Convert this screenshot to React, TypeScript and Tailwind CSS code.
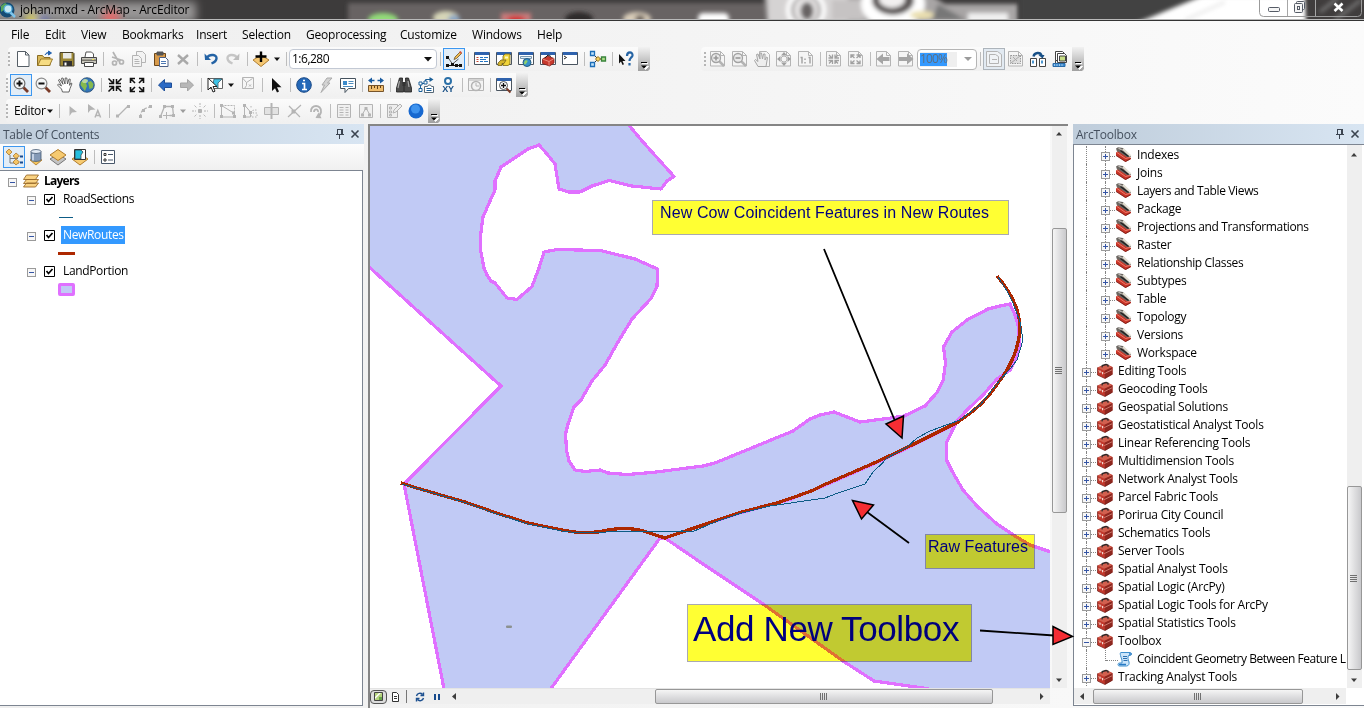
import React from "react";

type Kids = { children?: React.ReactNode };

/* ---------- icon drawings, 16 x 16 ---------- */

const G = "#b4b4b4";
const windowFrame = (
  <g>
    <path d="M.5 1.500h15v12h-15z" fill="#fff" stroke="#4b5560" />
    <path d="M1 1h14v3H1z" fill="#2f62ad" />
  </g>
);
const pageWide = <path d="M.5 .5h10l4 4v10.500h-14z M10.500 .5v4h4" fill="#f5f5f5" stroke={G} />;

const glyphs: Record<string, React.ReactNode> = {
  new: <path d="M2.500 .5h8l3.500 3.500v11.500h-11.500z M10.500 .5v3.500h3.500" fill="#fff" stroke="#555e66" />,
  open: (
    <g>
      <path d="M.5 14.500v-10h5l1.500 2h6v8z" fill="#d9b95c" stroke="#8a6c22" />
      <path d="M.8 14.500l3-6.500h11.700l-3 6.500z" fill="#f6dc83" stroke="#9a7b2b" />
      <path d="M8 4c1-2 2-2.500 4-2.500M11.500 0l3 2-3 2z" fill="#1f5fae" stroke="#1f5fae" />
    </g>
  ),
  save: (
    <g>
      <path d="M1 1.500h13l1 1v12.500h-14z" fill="#9c8734" stroke="#47402a" />
      <path d="M4 2h8.500v5.500h-8.500z" fill="#e9e9e4" />
      <path d="M4 10h9v5h-9z" fill="#303030" />
      <path d="M5.500 11.500h2v3h-2z" fill="#fff" />
    </g>
  ),
  print: (
    <g>
      <path d="M4 6l1-5h5.500l2 2v3" fill="#fff" stroke="#555" />
      <path d="M.5 6.500h15v6h-15z" fill="#c9c7bd" stroke="#474747" />
      <path d="M1 8.500h14v1.500h-14z" fill="#77756c" />
      <path d="M3.500 11.500h9v4h-9z" fill="#fff" stroke="#474747" />
      <path d="M11 8h2v1h-2z" fill="#e8e04d" />
    </g>
  ),
  cut: (
    <g fill="none" stroke={G} strokeWidth="1.700">
      <path d="M4 1l5.500 9.500M3 6l9 3" />
      <circle cx="5.500" cy="12" r="2" />
      <circle cx="12.500" cy="11" r="2" />
    </g>
  ),
  copy: (
    <g fill="#f3f3f3" stroke={G}>
      <path d="M5.500 .5h6l3 3v8h-9z" />
      <path d="M1.500 4.500h6l3 3v8h-9z" />
      <path d="M3.500 8.500h4M3.500 10.500h5M3.500 12.500h5" />
    </g>
  ),
  paste: (
    <g>
      <path d="M1.500 2.500h11v12h-11z" fill="#d79a4b" stroke="#6b4619" />
      <path d="M4 1h6v3h-6z" fill="#555" stroke="#555" />
      <path d="M6.500 6.500h6l2.500 2.500v6.500h-8.500z" fill="#fff" stroke="#4c5f85" />
      <path d="M8 10.500h5M8 12.500h5" stroke="#4d78b4" />
    </g>
  ),
  del: <path d="M3 4l10 9M13 4l-10 9" stroke="#a9a9a9" strokeWidth="2.400" />,
  undo: (
    <g>
      <path d="M4 6.500c3-4 10-3 9.500 1-.3 2.500-2.500 4-5 5" fill="none" stroke="#2463a5" strokeWidth="2.400" />
      <path d="M1.500 2.500l.5 6.500h6z" fill="#2463a5" />
    </g>
  ),
  redo: (
    <g>
      <path d="M12 6.500c-3-4-10-3-9.500 1 .3 2.500 2.500 4 5 5" fill="none" stroke="#c6c6c6" strokeWidth="2.400" />
      <path d="M14.500 2.500l-.5 6.500h-6z" fill="#bdbdbd" />
    </g>
  ),
  add: (
    <g>
      <path d="M8 4l8 5-8 6.500-8-6.500z" fill="#f5c772" stroke="#b07f32" />
      <path d="M8 .5v10.500M2.500 5.500h11" stroke="#000" strokeWidth="2.400" />
    </g>
  ),
  sketch: (
    <g>
      <path d="M2 6.500l4.500 6.500 6-5" fill="none" stroke="#555" />
      <path d="M8 8.500l1-2.500 5-5 1.500 1.500-5 5z" fill="#f2bd52" stroke="#6a5328" strokeWidth=".8" />
      <path d="M13 1l1.500-1 1.500 1.500-1 1.500z" fill="#d9533b" />
      <path d="M0 5h3v3H0zM0 13h3v3H0zM5 12h3v3H5zM9 13h3v3H9zM13 13h3v3h-3z" fill="#111" />
      <path d="M1 14.500h13" stroke="#111" />
    </g>
  ),
  tocwin: (
    <g>
      {windowFrame}
      <path d="M2.500 6.500h2M2.500 8.500h2M2.500 10.500h2" stroke="#c7432e" />
      <path d="M6 6.500h3M10 6.500h4M6 8.500h6M6 10.500h3M10 10.500h4" stroke="#2576c4" />
    </g>
  ),
  catalog: (
    <g>
      {windowFrame}
      <path d="M7 5l2-2h5v10l-2 1.500h-5z" fill="#f0d43b" stroke="#796818" strokeWidth=".8" />
      <path d="M9 5.500h3v2h-3z" fill="#fff9bf" />
      <path d="M2 12l3-3h5l-2 3.500h-2v2h-4z" fill="#d6b52c" stroke="#75631c" strokeWidth=".8" />
    </g>
  ),
  search: (
    <g>
      {windowFrame}
      <path d="M2.500 5.500h11v2h-11z" fill="#e4f2fb" stroke="#7997b0" />
      <circle cx="9" cy="11.500" r="4" fill="#368fca" stroke="#245d84" />
      <path d="M7 9.500c3-1 3 1 2 2s-1 2-2 2-1.500-2 0-4z" fill="#8fd06a" />
    </g>
  ),
  toolboxwin: (
    <g>
      {windowFrame}
      <path d="M2.500 8l5-3 6.500 2.500v4.500l-4.500 3-7-2.500z" fill="#c8392e" stroke="#7c1a14" strokeWidth=".8" />
      <path d="M2.500 8l6.500 2.500 5-3M9 10.500v4" stroke="#f1a091" fill="none" strokeWidth=".8" />
      <path d="M5 7l3-3 3 1.500" stroke="#222" fill="none" />
    </g>
  ),
  python: (
    <g>
      {windowFrame}
      <path d="M2 5l2.500 1.500-2.500 1.500" fill="none" stroke="#222" />
    </g>
  ),
  model: (
    <g>
      <path d="M3 3l5 5M3 13l5-5h4" fill="none" stroke="#333" />
      <path d="M.5 .5h4v4h-4zM.5 11.500h4v4h-4z" fill="#bfe2fa" stroke="#1d6eb8" strokeWidth="1.300" />
      <path d="M8 5.500l2.500 2.500-2.500 2.500-2.500-2.500z" fill="#f6cf5c" stroke="#94731b" />
      <path d="M11.500 6h4v4h-4z" fill="#aedc88" stroke="#37833a" strokeWidth="1.300" />
    </g>
  ),
  help: (
    <g>
      <path d="M1 3v9.500l2-2 1.500 3.500 1.500-.8-1.500-3.200h3z" fill="#111" />
      <path d="M9 5c0-5 6-4.500 5.500-.5-.3 2-3 2.500-3 5.500M11.500 12v2.500" fill="none" stroke="#2664a4" strokeWidth="2.200" />
    </g>
  ),
  zoomin: (
    <g>
      <path d="M9.500 9.500l5.500 5.500" stroke="#7a3b28" strokeWidth="2.800" />
      <circle cx="6.500" cy="6.500" r="5.400" fill="#f4f6f7" stroke="#6d6d6d" strokeWidth="1.200" />
      <path d="M3.500 6.500h6M6.500 3.500v6" stroke="#111" strokeWidth="2" />
    </g>
  ),
  zoomout: (
    <g>
      <path d="M9.500 9.500l5.500 5.500" stroke="#7a3b28" strokeWidth="2.800" />
      <circle cx="6.500" cy="6.500" r="5.400" fill="#f4f6f7" stroke="#8b8b8b" strokeWidth="1.200" />
      <path d="M3.500 6.500h6" stroke="#111" strokeWidth="2" />
    </g>
  ),
  hand: (
    <path
      d="M5.500 15l-1-3-4-4 1-1 3 2-3-6 1.200-.7 3.300 5-1.500-6 1.500-.3 2 6 .2-6h1.600l.7 6 1.500-5 1.300.3-.8 6 1.500-2.300 1 .6-2 5-1 3.400z"
      fill="#fff"
      stroke="#555"
      strokeWidth=".9"
    />
  ),
  globe: (
    <g>
      <circle cx="8" cy="8" r="7.300" fill="#3275bb" stroke="#25486c" strokeWidth=".8" />
      <path d="M2 5l4-3 3 1-2 3 1 3-2 5-3-4-1.500-2zM9 5l3-1 2.500 3-1 4-3 1z" fill="#86b94d" />
      <ellipse cx="6" cy="4" rx="3" ry="2" fill="#fff" opacity=".45" />
    </g>
  ),
  fixedin: (
    <path d="M6.500 2v4.500h-4.500M9.500 2v4.500h4.500M6.500 14v-4.500h-4.500M9.500 14v-4.500h4.500M1.500 1.500l4.500 4.500M14.500 1.500l-4.500 4.500M1.500 14.500l4.500-4.500M14.500 14.500l-4.500-4.500" fill="none" stroke="#111" strokeWidth="1.500" />
  ),
  fixedout: (
    <path d="M1.500 6v-4.500h4.500M14.500 6v-4.500h-4.500M1.500 10v4.500h4.500M14.500 10v4.500h-4.500M2 2l4 4M14 2l-4 4M2 14l4-4M14 14l-4-4" fill="none" stroke="#111" strokeWidth="1.600" />
  ),
  back: <path d="M1.500 8l6-5.500v3.500h7v4.500h-7v3.500z" fill="#2b6ac5" stroke="#1e4e98" />,
  fwd: <path d="M14.500 8l-6-5.500v3.500h-7v4.500h7v3.500z" fill="#b7b7b7" stroke="#a5a5a5" />,
  select: (
    <g>
      <path d="M1.500 1.500h14v10h-14z" fill="#fff" stroke="#666" />
      <path d="M7 2h8l-4 4 0 5-5-4z" fill="#3ec4e8" stroke="#375c6b" strokeWidth=".8" />
      <path d="M1 1v12l3-3 2 5 2-.8-2-4.700h4z" fill="#fff" stroke="#222" />
    </g>
  ),
  clear: (
    <path d="M2.500 .5h11v11h-11zM2.500 1l4 4.500 6-4M6.500 5.500v3l-2 3M9 7.500l2 2M11 7.500l-2 2" fill="#f6f6f6" stroke={G} />
  ),
  pointer: <path d="M4 1v13l3-2.800 2 4.300 2-1-2-4.200h4.500z" fill="#111" />,
  info: (
    <g>
      <circle cx="8" cy="8" r="7.300" fill="#2468b8" stroke="#1b4a87" />
      <path d="M6 6.500h2.500v5.500M6 12.500h5M7 3.500h2" stroke="#fff" strokeWidth="1.700" fill="none" />
    </g>
  ),
  bolt: <path d="M9 1h5l-4.500 5h2.500l-9 9.500 3.500-7.500h-2.500z" fill="#d3d3d3" stroke="#aaa" />,
  popup: (
    <g>
      <path d="M.5 1.500h15v10h-7l-3.500 4v-4h-4.500z" fill="#fff" stroke="#45525e" />
      <path d="M3 4h4v4h-4z" fill="#3c8bcb" />
      <path d="M8.500 4.500h5M8.500 6.500h5M3 9.500h10" stroke="#4f8dbe" />
    </g>
  ),
  measure: (
    <g>
      <path d="M1.500 3.500h5M9.500 3.500h5" stroke="#1b5ca0" strokeWidth="1.600" />
      <path d="M0 3.500l4-3v6zM16 3.500l-4-3v6z" fill="#1b5ca0" />
      <path d="M.5 8.500h15v6h-15z" fill="#f0bd6d" stroke="#77542a" />
      <path d="M3.500 9v3M6.500 9v2M9.500 9v3M12.500 9v2" stroke="#60401a" />
    </g>
  ),
  find: (
    <g>
      <path d="M3.500 1h3v3.500l1 2.500v8h-7v-4zM12.500 1h-3v3.500l-1 2.500v8h7v-4z" fill="#4c4c4c" stroke="#202020" strokeWidth=".8" />
      <path d="M6.500 5h3v4h-3z" fill="#333" />
      <path d="M3.500 4l-1.500 7M12 4l1 6" stroke="#aaa" strokeWidth="1.200" />
    </g>
  ),
  route: (
    <g fill="none" stroke="#1b5f98">
      <path d="M2.500 12.500v-6h5v-4h5" />
      <path d="M11.500 0l4 2.500-4 2.500z" fill="#1b5f98" stroke="none" />
      <path d="M1 5h3v3h-3zM1 11.500h3v3h-3zM6 4h3v3h-3z" fill="#fff" />
      <path d="M6.500 9.500h3l1-1.500h2l1 1.500h2v6h-9z" fill="#fff" stroke="#546776" />
      <path d="M8.500 11.500h5M8.500 13.500h5" />
    </g>
  ),
  clock: (
    <g fill="#f3f3f3" stroke={G}>
      <path d="M.5 1.500h15v12h-15zM.5 3h15" />
      <circle cx="8" cy="9" r="4.500" strokeWidth="1.500" />
      <path d="M8 6v3h3" fill="none" />
    </g>
  ),
  viewer: (
    <g>
      {windowFrame}
      <path d="M10 11l4.500 4.500" stroke="#7a3b28" strokeWidth="2" />
      <circle cx="7.500" cy="8.500" r="4" fill="#fff" stroke="#555" />
      <path d="M5 8.500h5M7.500 6v5" stroke="#111" strokeWidth="1.300" />
    </g>
  ),
  edit: <path d="M4.500 3v10l2.500-3.500 5-.5z" fill={G} />,
  edita: (
    <g>
      <path d="M1 1v9l2.500-3 5-.5z" fill={G} />
      <path d="M8 14.500l2.800-7 2.800 7M9 12.500h4" fill="none" stroke={G} strokeWidth="1.500" />
    </g>
  ),
  straight: (
    <g>
      <path d="M3 13l10-10" stroke={G} strokeWidth="1.300" />
      <path d="M1 11.500h3v3h-3zM12 2h3v3h-3z" fill={G} />
    </g>
  ),
  arc: (
    <g>
      <path d="M3.500 14c0-6 3-9 10-10" stroke={G} strokeWidth="1.300" fill="none" strokeDasharray="3 1.500" />
      <path d="M2 12h3v3h-3zM5 6h3v3h-3zM12 2h3v3h-3z" fill={G} />
    </g>
  ),
  trace: (
    <g stroke={G} fill="none">
      <path d="M1.500 13.500l4-10h8l1 9h-4" strokeWidth="1.300" />
      <path d="M7.500 9v7M4 12.500h7" />
      <path d="M4 2h3v3h-3zM12 2h3v3h-3zM0 12h3v3h-3zM13 11h3v3h-3z" fill={G} stroke="none" />
    </g>
  ),
  point: (
    <g stroke={G}>
      <path d="M8 0v4M8 12v4M0 8h4M12 8h4M2.500 2.500l2.500 2.500M13.500 2.500l-2.500 2.500M2.500 13.500l2.500-2.500M13.500 13.500l-2.500-2.500" strokeDasharray="2 1" />
      <path d="M6.500 6.500h3v3h-3z" fill={G} />
    </g>
  ),
  vertices: (
    <g stroke={G} fill="none">
      <path d="M1.500 2.500h13v8" strokeDasharray="2 1" />
      <path d="M1.500 2.500v11.500h13v-3.500z" />
      <path d="M0 1h3v3h-3zM0 12h3v3h-3zM13 12h3v3h-3zM12 8.500h3v3h-3z" fill={G} stroke="none" />
    </g>
  ),
  reshape: (
    <g stroke={G} fill="none">
      <path d="M2.500 2v12h6v-5z" />
      <path d="M9 3v3M9 9v5h6v-4h-4v-3h4" strokeDasharray="1.500 1.500" />
      <path d="M1 1h3v3h-3zM1 12h3v3h-3zM7 8h3v3h-3z" fill={G} stroke="none" />
    </g>
  ),
  cutpoly: (
    <g stroke={G}>
      <path d="M.5 4.500h14v7h-14z" fill="#e2e2e2" />
      <path d="M7.500 0v16" strokeWidth="2" />
    </g>
  ),
  split: (
    <g stroke={G}>
      <path d="M2 14l13-12M3 3l4 4M9 9l5 5" strokeWidth="1.200" />
      <path d="M6 7h3v3h-3z" fill={G} />
    </g>
  ),
  rotate: (
    <g>
      <path d="M3 9c-1-8 11-8 10 0-.4 2.500-2 4-4 5M6 9c0-3.500 4.500-3.500 4 0" fill="none" stroke={G} strokeWidth="1.800" />
      <path d="M10.500 9.500l-3 5.500 6 .3z" fill={G} />
    </g>
  ),
  attrs: (
    <path d="M1.500 1.500h13v13h-13zM3.500 4.500h4M9.500 4.500h3M3.500 7h4M9.500 7h3M3.500 9.500h4M9.500 9.500h3M3.500 12h4M9.500 12h3" fill="#f0f0f0" stroke={G} />
  ),
  sketchprops: (
    <g>
      <path d="M1.500 1.500h13v13h-13zM4 12l4-7 4 7" fill="#f0f0f0" stroke={G} />
      <path d="M3 10.500h3v3h-3zM6.500 4h3v3h-3zM10 10.500h3v3h-3z" fill={G} />
    </g>
  ),
  create: (
    <g stroke={G} fill="#eee">
      <path d="M1.500 1.500h10v13h-10zM3.500 4h2v2h-2zM3.500 8h2v2h-2zM3.500 11.500h2v1.500h-2z" />
      <path d="M7 10l1-3 6-6 2 2-6 6z" />
    </g>
  ),
  ball: (
    <g>
      <circle cx="8" cy="8" r="7.500" fill="#1768cf" />
      <circle cx="7.500" cy="6" r="4.500" fill="#3e93ee" />
    </g>
  ),
  pzoomin: (
    <g>
      {pageWide}
      <path d="M9 10l5 5" stroke={G} strokeWidth="2.500" />
      <circle cx="6" cy="7" r="4.500" fill="#e9e9e9" stroke="#a2a2a2" strokeWidth="1.300" />
      <path d="M3.500 7h5M6 4.500v5" stroke="#999" strokeWidth="1.600" />
    </g>
  ),
  pzoomout: (
    <g>
      {pageWide}
      <path d="M9 10l5 5" stroke={G} strokeWidth="2.500" />
      <circle cx="6" cy="7" r="4.500" fill="#e9e9e9" stroke="#a2a2a2" strokeWidth="1.300" />
      <path d="M3.500 7h5" stroke="#999" strokeWidth="1.600" />
    </g>
  ),
  phand: (
    <g>
      <path d="M5.500 .5h7l3 3v12h-10z" fill="#f5f5f5" stroke={G} />
      <path d="M4 15.500l-3.500-6 1-1 2.500 2-1.500-7 1.500-.5 2 5v-6h1.500l1 6 1-5h1.500v6l1.500-3 1 .5-1.500 9z" fill="#eee" stroke="#a5a5a5" />
    </g>
  ),
  pfull: (
    <g>
      {pageWide}
      <path d="M8 1l3 3.500h-6zM8 15l3-3.500h-6zM1 8l3.500-3v6zM15 8l-3.500-3v6z" fill="#a0a0a0" />
      <circle cx="8" cy="8" r="3" fill="none" stroke={G} />
    </g>
  ),
  pone: (
    <g>
      {pageWide}
      <path d="M2.500 6.500h1.500v6M10.500 6.500h1.500v6M7 7.500v1.500M7 11v1.500" fill="none" stroke="#a5a5a5" strokeWidth="1.500" />
    </g>
  ),
  pin: (
    <g>
      {pageWide}
      <path d="M6.500 3.500v3.500h-4M9 3.500v3.500h4M6.500 13v-3.500h-4M9 13v-3.500h4M3 4l3 3M12 4l-3 3M3 12.500l3-3M12 12.500l-3-3" stroke="#a0a0a0" fill="none" strokeWidth="1.300" />
    </g>
  ),
  pout: (
    <g>
      {pageWide}
      <path d="M3 7v-3h3.500M12 7v-3h-3.500M3 9.500v3h3.500M12 9.500v3h-3.500M3 4l3.500 3M12 4l-3.500 3M3 12.500l3.500-3M12 12.500l-3.500-3" stroke="#a0a0a0" fill="none" strokeWidth="1.400" />
    </g>
  ),
  pback: (
    <g>
      {pageWide}
      <path d="M.5 8l6.500-5.500v3.500h6.500v4h-6.500v3.500z" fill="#a5a5a5" />
    </g>
  ),
  pfwd: (
    <g>
      {pageWide}
      <path d="M15.500 8l-6.500-5.500v3.500h-8v4h8v3.500z" fill="#a5a5a5" />
    </g>
  ),
  draft: (
    <g fill="none" stroke={G}>
      <path d="M.5 .5h11l4 3v12h-15z" fill="#f0f3f6" />
      <path d="M3.500 3.500h6l3 2v7h-9zM6 8.500h5" />
    </g>
  ),
  focus: (
    <g>
      {pageWide}
      <path d="M2.500 4.500h10v8h-10z" fill="#ddd" stroke="#999" strokeDasharray="1.500 1" />
      <path d="M3 12l9-7M5 6l4 4" stroke="#aaa" />
    </g>
  ),
  changelayout: (
    <g>
      <path d="M.5 7.500h6v8h-6zM9.500 7.500h6v8h-6z" fill="#fff" stroke="#444" />
      <path d="M2 9.500h2v3h-2zM11 9.500h2v3h-2z" fill="#4b96d0" />
      <path d="M3.500 5.500c1-4.500 7-4.500 8-1" fill="none" stroke="#174f86" strokeWidth="2.400" />
      <path d="M8.500 4h6l-2 3.500z" fill="#174f86" />
    </g>
  ),
  ddp: (
    <g fill="#fff" stroke="#444">
      <path d="M3.500 .5h7l2 2v7h-9z" />
      <path d="M5.500 2.500h7l2 2v7h-9z" />
      <path d="M7.500 5h6v5h-6z" fill="#c6dd85" />
      <path d="M3.500 9.500v3" />
      <path d="M1 12.500h12v3h-12z" fill="#3a8bd0" stroke="#2a6aa8" />
      <path d="M2 14h10" stroke="#fff" strokeDasharray="1 1.500" />
    </g>
  ),
  bysource: (
    <g>
      <path d="M4 6v8h9M4 9.500h8" fill="none" stroke="#777" />
      <path d="M3 0l3 3-3 3-3-3zM10 4l3.500 3-3.500 2.500-3-2.500zM10 10l3.500 3-3.500 3-3-3z" fill="#f5c565" stroke="#ac782c" strokeWidth=".8" />
      <path d="M14 7.500h3M14 13.500h3" stroke="#184b90" strokeWidth="2" />
    </g>
  ),
  db: (
    <g>
      <path d="M2 11l6-2 6 2-6 5z" fill="#f5c55b" stroke="#a87425" strokeWidth=".8" />
      <path d="M3 2.500v8c0 2.500 10 2.500 10 0v-8z" fill="#8399b6" stroke="#435872" strokeWidth=".8" />
      <ellipse cx="8" cy="2.500" rx="5" ry="2" fill="#e1eaf4" stroke="#435872" strokeWidth=".8" />
      <path d="M5 5v6.500" stroke="#d8e5f3" strokeWidth="1.500" />
    </g>
  ),
  vis: (
    <g>
      <path d="M8 5l8 5-8 6-8-6z" fill="#c3c3c3" stroke="#777" />
      <path d="M8 .5l8 5.500-8 5.500-8-5.500z" fill="#f6ca70" stroke="#b17c2c" />
    </g>
  ),
  sel: (
    <g>
      <path d="M8 5l8 5-8 6-8-6z" fill="#f6ca70" stroke="#b17c2c" />
      <path d="M2.500 .5h11v10h-11z" fill="#fff" stroke="#333" />
      <path d="M3 1h6l2 2-2 3v4h-6z" fill="#25bddc" stroke="#333" strokeWidth=".7" />
    </g>
  ),
  opts: (
    <g>
      <path d="M1.500 1.500h13v13h-13z" fill="#fff" stroke="#48576a" />
      <path d="M4 4.500h2v2h-2zM4 10h2v2h-2z" fill="#fff" stroke="#333" />
      <path d="M8 5.500h5M8 11h5" stroke="#48576a" />
    </g>
  ),
};

function Icon({ n }: { n: string }) {
  return (
    <svg viewBox="0 0 16 16" className="h-4 w-4 shrink-0 overflow-visible">
      {glyphs[n]}
    </svg>
  );
}

function Btn({ n, on }: { n: string; on?: boolean }) {
  return (
    <div className={`flex h-[22px] w-[22px] shrink-0 items-center justify-center ${on ? "border border-[#3c97f0] bg-[#e2edf7]" : ""}`}>
      {n === "xy" ? <XY /> : <Icon n={n} />}
    </div>
  );
}

function XY() {
  return (
    <div className="flex flex-col items-center">
      <div className="h-[8px] w-[8px] rounded-full border-2 border-[#2b70a8] bg-white" />
      <div className="h-[8px] font-['Liberation_Sans',sans-serif] text-[9px] leading-[9px] font-bold text-[#174f86]">XY</div>
    </div>
  );
}

function Sep() {
  return (
    <div className="flex h-[22px] w-[6px] shrink-0 items-center justify-center">
      <div className="h-[14px] w-px bg-[#bdbdbd]" />
    </div>
  );
}

function Grip() {
  return (
    <div className="flex h-[22px] w-[6px] shrink-0 flex-col justify-center gap-[2px]">
      {[0, 1, 2, 3].map((i) => (
        <div key={i} className="h-[2px] w-[2px] bg-[#b5b5b5]" />
      ))}
    </div>
  );
}

function Drop({ dim }: { dim?: boolean }) {
  return (
    <svg viewBox="0 0 11 22" className="h-[22px] w-[11px] shrink-0">
      <path d="M2 9.500h6l-3 3.500z" fill={dim ? "#9c9c9c" : "#111"} />
    </svg>
  );
}

function Overflow() {
  return (
    <svg viewBox="0 0 12 24" className="ml-px h-6 w-3 shrink-0">
      <defs>
        <linearGradient id="ovf" x1="0" y1="0" x2="0" y2="1">
          <stop offset="0" stopColor="#f2f2f2" />
          <stop offset="1" stopColor="#a0a0a0" />
        </linearGradient>
      </defs>
      <path d="M0 0h12v22l-2 2h-10z" fill="url(#ovf)" />
      <path d="M4 16.500h6M4.500 19.500h6l-3 3z" stroke="#fff" fill="#fff" />
      <path d="M3 15.500h6" stroke="#000" />
      <path d="M3 18.500h6l-3 3z" fill="#000" />
    </svg>
  );
}

function Bar({ children }: Kids) {
  return (
    <div className="flex h-6 shrink-0 items-center rounded-l bg-gradient-to-b from-[#fbfbfb] to-[#f0f0f0]">{children}</div>
  );
}

/* ---------- title bar ---------- */

function TitleBar() {
  return (
    <div className="relative h-[21px] shrink-0 overflow-hidden bg-[#3d3b3b]">
      <svg viewBox="0 0 1364 21" className="absolute inset-0 h-[21px] w-[1364px]">
        <defs>
          <filter id="b4" x="-20%" y="-100%" width="140%" height="300%">
            <feGaussianBlur stdDeviation="4" />
          </filter>
          <filter id="b2" x="-20%" y="-100%" width="140%" height="300%">
            <feGaussianBlur stdDeviation="2" />
          </filter>
        </defs>
        <rect x="-10" y="2" width="206" height="20" fill="#979595" filter="url(#b4)" />
        <g filter="url(#b4)">
          <circle cx="32" cy="20" r="6" fill="#f3e64e" />
          <circle cx="42" cy="22" r="5" fill="#5568d8" />
          <circle cx="111" cy="18" r="9" fill="#e26b6b" />
        </g>
        <rect x="348" y="3" width="420" height="30" fill="#686363" filter="url(#b2)" />
        <g filter="url(#b2)">
          <ellipse cx="383" cy="20" rx="15" ry="7" fill="#93dc79" />
          <ellipse cx="446" cy="18" rx="13" ry="7" fill="#d6d5b8" />
          <ellipse cx="454" cy="20" rx="6" ry="5" fill="#88a5c4" />
          <rect x="501" y="13" width="30" height="10" fill="#c77a7a" />
          <ellipse cx="516" cy="20" rx="9" ry="4" fill="#d22e2e" />
          <ellipse cx="579" cy="19" rx="14" ry="7" fill="#2d2b2b" />
          <ellipse cx="637" cy="19" rx="14" ry="7" fill="#d9cdb9" />
          <ellipse cx="640" cy="19" rx="5" ry="4" fill="#6a625c" />
          <rect x="698" y="13" width="31" height="14" rx="5" fill="#fff" />
          <path d="M764 -6h165l16 10h73v32h-250z" fill="#a8a5a5" />
          <rect x="768" y="-6" width="80" height="34" fill="#d5d3d3" />
          <ellipse cx="806" cy="10" rx="20" ry="20" fill="#fff" />
          <ellipse cx="806" cy="10" rx="15" ry="15" fill="#9b9898" />
          <ellipse cx="806" cy="10" rx="12" ry="13" fill="#e8e6e6" />
          <ellipse cx="807" cy="11" rx="6.500" ry="9" fill="#686464" />
          <path d="M832 0h32v20h-32z" fill="#c6c3c3" />
          <ellipse cx="893" cy="4" rx="32" ry="24" fill="#fff" />
          <ellipse cx="893" cy="0" rx="21" ry="15" fill="#5b5757" />
          <ellipse cx="892" cy="-1" rx="13" ry="9" fill="#f2f0f0" />
          <path d="M938 4l28 16h-34z" fill="#777" />
          <rect x="968" y="13" width="40" height="14" fill="#f0f0f0" />
          <ellipse cx="922" cy="15" rx="12" ry="4" fill="#eadfaf" />
        </g>
        <rect x="1019" y="-5" width="200" height="34" fill="#434242" filter="url(#b2)" />
        <path d="M1134 24l68-28h104l4 32z" fill="#fff" filter="url(#b2)" />
        <path d="M1185 20l40-18" stroke="#e4e4e4" strokeWidth="2" filter="url(#b2)" />
        <path d="M1306 -8h70v38h-70z" fill="#3f3d3d" filter="url(#b2)" />
        <path d="M1320 12l18-14M1335 20l26-20" stroke="#777" strokeWidth="3" filter="url(#b2)" />
        <path d="M0 19.500h1364" stroke="#b9b9b9" />
        <path d="M0 20.500h1364" stroke="#343434" />
        <g fill="none">
          <path d="M1259.500 -2v14.500q0 4 4 4h94q4 0 4-4V-2" stroke="#9a9a9a" />
          <path d="M1287.500 0v16M1315.500 0v16" stroke="#a6a6a6" />
          <rect x="1268.500" y="7.500" width="11" height="4" rx="1" fill="#f5f5f5" stroke="#555b66" />
          <rect x="1296.500" y="1.500" width="8" height="8" rx="1" fill="#f5f5f5" stroke="#555b66" />
          <rect x="1294.500" y="3.500" width="8" height="9" rx="1" fill="#f5f5f5" stroke="#555b66" />
          <rect x="1297.500" y="6.500" width="2" height="3" stroke="#555b66" />
          <path d="M1334.500 3.500l8 7.500M1342.500 3.500l-8 7.500" stroke="#555" strokeWidth="4" />
          <path d="M1334.500 3.500l8 7.500M1342.500 3.500l-8 7.500" stroke="#fff" strokeWidth="2.400" />
        </g>
      </svg>
      <div className="relative flex h-5 items-center">
        <svg viewBox="0 0 16 16" className="h-4 w-4 shrink-0">
          <circle cx="7" cy="8" r="7.500" fill="#164c75" />
          <path d="M1 4l4-3 3 2-4 5-3 2z" fill="#59a55b" />
          <path d="M10 10l5 5" stroke="#7cc4ec" strokeWidth="2.500" />
          <circle cx="8" cy="7" r="4" fill="#c5e7f4" stroke="#4aa7d8" strokeWidth="1.200" />
        </svg>
        <span className="ml-1 text-[12px] tracking-[-0.17px] text-black">johan.mxd - ArcMap - ArcEditor</span>
      </div>
    </div>
  );
}

function MenuBar() {
  return (
    <div className="flex h-[26px] shrink-0 items-center pt-[1px] text-[12px]">
      <span className="ml-[11px] w-[34px]">File</span>
      <span className="w-[36px]">Edit</span>
      <span className="w-[41px]">View</span>
      <span className="w-[74px]">Bookmarks</span>
      <span className="w-[46px]">Insert</span>
      <span className="w-[64px]">Selection</span>
      <span className="w-[94px]">Geoprocessing</span>
      <span className="w-[72px]">Customize</span>
      <span className="w-[65px]">Windows</span>
      <span>Help</span>
    </div>
  );
}

function Toolbars() {
  return (
    <div className="flex h-[77px] shrink-0 flex-col gap-[2px]">
      <div className="flex pl-[8px]">
        <Bar>
          <Grip />
          <div className="-ml-[2px] flex items-center">
            <Btn n="new" /><Btn n="open" /><Btn n="save" /><Btn n="print" /><Sep />
            <Btn n="cut" /><Btn n="copy" /><Btn n="paste" /><Btn n="del" /><Sep />
            <Btn n="undo" /><Btn n="redo" /><Sep />
            <Btn n="add" /><Drop /><Sep />
            <div className="flex h-5 w-[148px] items-center justify-between rounded-sm border border-[#c3c9d4] bg-white pl-[2px] text-[12px] tracking-[-0.5px]">
              <span>1:6,280</span>
              <svg viewBox="0 0 14 14" className="h-3.5 w-3.5"><path d="M2 5h8l-4 4.500z" fill="#111" /></svg>
            </div>
            <Sep />
            <Btn n="sketch" on /><Sep />
            <Btn n="tocwin" /><Btn n="catalog" /><Btn n="search" /><Btn n="toolboxwin" /><Btn n="python" /><Sep />
            <Btn n="model" /><Sep /><Btn n="help" />
          </div>
          <Overflow />
        </Bar>
        <div className="ml-[51px]">
          <Bar>
            <div className="w-[3px]" /><Grip />
            <div className="-ml-[3px] flex items-center">
              <Btn n="pzoomin" /><Btn n="pzoomout" /><Btn n="phand" /><Btn n="pfull" /><Btn n="pone" /><Sep />
              <Btn n="pin" /><Btn n="pout" /><Sep />
              <Btn n="pback" /><Btn n="pfwd" />
              <div className="flex h-[21px] w-[60px] items-center justify-between rounded-sm border border-[#b5b5b5] bg-white pl-[2px]">
                <div className="flex h-[15px] w-[37px] items-center bg-[#efefef]">
                  <span className="flex h-[13px] w-[27px] items-center bg-[#3399ff] text-[12px] tracking-[-0.9px] text-[#5b6f83]">100%</span>
                </div>
                <svg viewBox="0 0 14 14" className="h-3.5 w-3.5"><path d="M2 5h8l-4 4z" fill="#9b9b9b" /></svg>
              </div>
              <Sep />
              <div className="flex h-[22px] w-[22px] items-center justify-center border border-[#adb4bb] bg-[#e2eaf2]"><Icon n="draft" /></div>
              <Btn n="focus" /><Btn n="changelayout" /><Btn n="ddp" />
            </div>
            <Overflow />
          </Bar>
        </div>
      </div>
      <div className="flex pl-[6px]">
        <Bar>
          <Grip />
          <div className="-ml-[2px] flex items-center">
            <Btn n="zoomin" on /><Btn n="zoomout" /><Btn n="hand" /><Btn n="globe" /><Sep />
            <Btn n="fixedin" /><Btn n="fixedout" /><Sep />
            <Btn n="back" /><Btn n="fwd" /><Sep />
            <Btn n="select" /><Drop /><Btn n="clear" /><Sep />
            <Btn n="pointer" /><Sep />
            <Btn n="info" /><Btn n="bolt" /><Btn n="popup" /><Sep />
            <Btn n="measure" /><Sep />
            <Btn n="find" /><Btn n="route" /><Btn n="xy" /><Sep />
            <Btn n="clock" /><Sep /><Btn n="viewer" />
          </div>
          <Overflow />
        </Bar>
      </div>
      <div className="flex pl-[6px]">
        <Bar>
          <Grip />
          <div className="flex items-center">
            <span className="ml-[2px] w-[31px] text-[12px] tracking-[-0.3px]">Editor</span><Drop /><Sep />
            <Btn n="edit" /><Btn n="edita" /><Sep />
            <Btn n="straight" /><Btn n="arc" /><Btn n="trace" /><Drop dim /><Btn n="point" /><Sep />
            <Btn n="vertices" /><Btn n="reshape" /><Btn n="cutpoly" /><Btn n="split" /><Btn n="rotate" /><Sep />
            <Btn n="attrs" /><Btn n="sketchprops" /><Sep />
            <Btn n="create" /><Btn n="ball" />
          </div>
          <Overflow />
        </Bar>
      </div>
    </div>
  );
}

/* ---------- shared panel parts ---------- */

function PanelHeader({ title }: { title: string }) {
  return (
    <div className="flex h-5 shrink-0 items-center justify-between bg-gradient-to-r from-[#bfcddb] to-[#d8e5f2] pr-1 pl-[3px] text-[12px] text-[#45505e]">
      <span className="pt-[2px] tracking-[-0.25px]">{title}</span>
      <svg viewBox="0 0 26 12" className="h-3 w-[26px]" fill="none" stroke="#3b4450">
        <path d="M3.500 1.500h5v5h-5zM1.500 6.500h8M5.500 7v4M7.500 1.500v5" shapeRendering="crispEdges" />
        <path d="M17.500 2.500l7 7M24.500 2.500l-7 7" strokeWidth="1.600" />
      </svg>
    </div>
  );
}

function Expander({ open }: { open?: boolean }) {
  return (
    <svg viewBox="0 0 9 9" className="h-[9px] w-[9px] shrink-0" shapeRendering="crispEdges">
      <path d="M.5 .5h8v8h-8z" fill="#f7f7f7" stroke="#9a9a9a" />
      <path d={open ? "M2 4.500h5" : "M2 4.500h5M4.500 2v5"} stroke="#3555a5" />
    </svg>
  );
}

function Check() {
  return (
    <svg viewBox="0 0 11 11" className="h-[11px] w-[11px] shrink-0">
      <path d="M.5 .5h10v10h-10z" fill="#fff" stroke="#000" />
      <path d="M2.500 5l2 2.500 4-4.500" fill="none" stroke="#000" strokeWidth="1.700" />
    </svg>
  );
}

function LayerRow({ name, on }: { name: string; on?: boolean }) {
  return (
    <div className="flex h-[18px] items-center pl-[27px]">
      <div className="mt-[2px]"><Expander open /></div>
      <div className="ml-2"><Check /></div>
      <span className={`ml-[6px] flex h-[18px] items-center pr-[1px] pl-[2px] text-[12px] tracking-[-0.35px] ${on ? "bg-[#3399ff] text-white" : ""}`}>{name}</span>
    </div>
  );
}

function Contents() {
  return (
    <div className="flex w-[364px] shrink-0 flex-col">
      <PanelHeader title="Table Of Contents" />
      <div className="flex h-[26px] shrink-0 items-center bg-gradient-to-b from-[#fdfdfd] to-[#f0f0f0] pl-[3px]">
        <Btn n="bysource" on /><Btn n="db" /><Btn n="vis" /><Btn n="sel" /><Sep /><Btn n="opts" />
      </div>
      <div className="mr-[1px] h-[536px] border-t border-r border-b border-[#7d8591] bg-white pt-[1px]">
        <div className="flex h-[18px] items-center pl-[8px]">
          <div className="mt-[2px]"><Expander open /></div>
          <svg viewBox="0 0 16 14" className="ml-[6px] h-[14px] w-4" fill="#f9d282" stroke="#9b6c2b" strokeWidth=".9">
            <path d="M.5 13l3-4h12l-3 4zM.5 9.500l3-4h12l-3 4zM.5 5.500l3-4.500h12l-3 4.500z" />
          </svg>
          <span className="ml-[5px] text-[12px] font-bold tracking-[-0.75px]">Layers</span>
        </div>
        <LayerRow name="RoadSections" />
        <div className="flex h-[18px] items-center pl-[59px]"><div className="h-px w-[14px] bg-[#0d5c86]" /></div>
        <LayerRow name="NewRoutes" on />
        <div className="flex h-[18px] items-center pl-[58px]"><div className="h-[3px] w-[17px] bg-[#ad2800]" /></div>
        <LayerRow name="LandPortion" />
        <div className="flex h-[18px] items-center pl-[58px]"><div className="h-[13px] w-[17px] rounded-[2px] border-3 border-[#e070ff] bg-[#c1caf5]" /></div>
      </div>
    </div>
  );
}

/* ---------- scroll bars ---------- */

function Arrow({ d }: { d: string }) {
  return (
    <svg viewBox="0 0 15 15" className="h-[15px] w-[15px] shrink-0">
      <path d={d} fill="#3d3d3d" />
    </svg>
  );
}
const UP = "M4 9.500h6l-3-3.500z";
const DOWN = "M4 5.500h6l-3 3.500z";
const LEFT = "M9 4v7l-4-3.500z";
const RIGHT = "M5 4v7l3.500-3.500z";

function ThumbV() {
  return (
    <div className="flex flex-1 flex-col items-center justify-center gap-px rounded-[2px] border border-[#979797] bg-gradient-to-r from-[#f5f5f5] to-[#c9c9cc] pr-[2px]">
      {[0, 1, 2, 3].map((i) => <div key={i} className="h-px w-[7px] bg-[#707070]" />)}
    </div>
  );
}
function ThumbH() {
  return (
    <div className="flex flex-1 items-center justify-center gap-px rounded-[2px] border border-[#979797] bg-gradient-to-b from-[#f5f5f5] to-[#c9c9cc] pr-[2px]">
      {[0, 1, 2, 3].map((i) => <div key={i} className="h-[7px] w-px bg-[#707070]" />)}
    </div>
  );
}

/* ---------- map ---------- */

const land =
  "M368 124H628L643 142 674 176.500 667 181 661 189 632 186 609 180.500 592 186 580 192H569L559 189 555 164 547 154 539 145 528 149 501 167 495 181V190L490 201 483 217 480.700 234V251L484 268 487 275 491 281 495 283 507 298 517 299.500 532 286.500 539 268 544 252 557 249.500 600 250.500 623 256 635 259 657.500 269 657 287 651 298.500 632 319 618 342 605 365 592 381 581 400 574 407 568 424 565.500 434 566.500 450 569 461 575 470 585 471.500 600 470 608 473 627 474.500 652 472.500 703 466 715 463 793 431 810 419 820 415 834 412 860 422 887 418.500 904 416 925 406 937 392.500 943 381 945.500 363 943.500 347 952 332 967 320 988 309 1000 306 1010 304 1015 315 1018 325 1020 345 1015 360 1010 370 997 379 983 395 967 410 957 421 952 431 946.500 443V460L952 471 963 490 977 506 997 524 1015 536 1030 545 1054 553V694H953L923 688 874 681 843 661 763 604 700 562 665 538 660 538 547 694H445L404 484 501 386 368 266Z";
const route =
  "M401 483L415 487.500 465 502 498 513.500 528 523 562 530 578 532.500 598 532 Q622 526 642 530.500L665 538 688 530 715 521 740 512.500 780 502 810 491.500 827 483.500 873 463.500 887 457 913 444.500 958 422Q984 405 996 386Q1010 368 1016 350Q1020 336 1020 327Q1019 301 997 276";
const road =
  "M402 484L465 502.500 498 514.500 528 524 562 531 575 532.500 598 532.500 615 531.500 683 531 692 532 715 522 740 513.500 770 506 825 498 838 493 865 484 873 472 882 463.500 887 458 907 447 917 438 930 431 960 420 980 405 1000 380 1010 369 1017 360 1023 340 1020 322 1013 303 1007 291 998 277";

function MapView() {
  return (
    <div className="flex w-[700px] shrink-0 flex-col border-t-2 border-l-2 border-[#858585]">
      <div className="flex h-[562px]">
        <svg viewBox="370 126 680 562" className="h-[562px] w-[680px] shrink-0 bg-white">
          <path d={land} fill="#c1caf5" stroke="#e070ff" strokeWidth="3.200" strokeLinejoin="round" shapeRendering="crispEdges" />
          <path d="M665 538L690 529.500 740 513 790 499.500 827 484.500 875 463.500 915 444.500 958 422.500" fill="none" stroke="#e070ff" strokeWidth="3" shapeRendering="crispEdges" />
          <path d={route} fill="none" stroke="#ad2800" strokeWidth="3.200" shapeRendering="crispEdges" />
          <path d={road} fill="none" stroke="#0d5c86" strokeWidth="1" shapeRendering="crispEdges" />
          <rect x="506" y="625.500" width="6" height="2.500" rx="1" fill="#8c9190" />
        </svg>
        <div className="ml-[2px] flex w-[15px] flex-col bg-[#efefef]">
          <Arrow d={UP} />
          <div className="h-[87px]" />
          <div className="flex h-[285px]"><ThumbV /></div>
          <div className="flex-1" />
          <Arrow d={DOWN} />
        </div>
      </div>
      <div className="flex h-[16px] w-[680px] items-center border-t border-[#e4e4e4] bg-[#efefef]">
        <div className="flex h-[14px] w-[17px] items-center justify-center rounded-sm border border-[#555] bg-[#dcdcdc]">
          <svg viewBox="0 0 9 9" className="h-[9px] w-[9px]">
            <path d="M.5 .5h8v8h-8z" fill="#b5d37c" stroke="#444" /><path d="M1 5l4-4h2l-6 6z" fill="#fff" /><path d="M5 5h3v3h-3z" fill="#66a34a" />
          </svg>
        </div>
        <svg viewBox="0 0 9 10" className="ml-[4px] h-[10px] w-[9px]"><path d="M1.500 .5h4l2 2v7h-6zM3 4.500h3M3 6.500h3" fill="#fff" stroke="#333" /></svg>
        <div className="ml-[6px] h-[13px] w-px bg-[#777]" />
        <svg viewBox="0 0 10 10" className="ml-[8px] h-[10px] w-[10px]" fill="none" stroke="#1c4f8f" strokeWidth="1.400">
          <path d="M1.500 4a3.500 3.500 0 0 1 6-1.500M8.500 6a3.500 3.500 0 0 1-6 1.500M8.500 .5v3h-3M1.500 9.500v-3h3" />
        </svg>
        <svg viewBox="0 0 8 8" className="ml-[8px] h-2 w-2"><path d="M1 1h2v6h-2zM5 1h2v6h-2z" fill="#174a8c" /></svg>
        <div className="ml-[6px]"><Arrow d={LEFT} /></div>
        <div className="w-[193px]" />
        <div className="flex h-[15px] w-[338px]"><ThumbH /></div>
        <div className="flex-1" />
        <Arrow d={RIGHT} />
      </div>
    </div>
  );
}

/* ---------- toolbox tree ---------- */

const toolsets = ["Indexes", "Joins", "Layers and Table Views", "Package", "Projections and Transformations", "Raster", "Relationship Classes", "Subtypes", "Table", "Topology", "Versions", "Workspace"];
const boxes = ["Editing Tools", "Geocoding Tools", "Geospatial Solutions", "Geostatistical Analyst Tools", "Linear Referencing Tools", "Multidimension Tools", "Network Analyst Tools", "Parcel Fabric Tools", "Porirua City Council", "Schematics Tools", "Server Tools", "Spatial Analyst Tools", "Spatial Logic (ArcPy)", "Spatial Logic Tools for ArcPy", "Spatial Statistics Tools", "Toolbox"];

function ToolsetIcon() {
  return (
    <svg viewBox="0 0 17 15" className="h-[15px] w-[17px] shrink-0">
      <path d="M1 1.500l2-1.200 5 .7 8 8.500-1.500 1.500-4-1-8.500-5.500z" fill="#6b6762" />
      <path d="M3.500 1l4 2.500" stroke="#bdb9b2" strokeWidth="1.300" />
      <path d="M8 2l7.500 7" stroke="#e3dfd2" strokeWidth="2" />
      <path d="M5.500 3.500l8 6" stroke="#222" strokeWidth="1.500" />
      <path d="M1 5.500l2-1 8.500 5.500 4.500.8v1.200l-5.500 3-9.500-6.500z" fill="#c93427" />
      <path d="M2 5.500l8.500 6 4.500-1" stroke="#ef8674" strokeWidth=".9" fill="none" />
      <path d="M1 8.500l9.500 6 5-2.700" stroke="#6f1c17" strokeWidth=".8" fill="none" />
    </svg>
  );
}
function ToolboxIcon() {
  return (
    <svg viewBox="0 0 16 16" className="h-4 w-4 shrink-0">
      <path d="M.5 4.500l8.500-3.700 6.500 3.200v7.200l-7.500 4.300-7.500-3.500z" fill="#c2382c" />
      <path d="M.8 4.700l8.200-3.400 6.200 2.900-7.700 3.500z" fill="#d2604f" />
      <path d="M7.500 7.700l8-3.700v7.200l-7.500 4.300z" fill="#8e271f" />
      <path d="M.5 4.500v7.500l7.500 3.500 7.500-4.300" stroke="#6f1c17" strokeWidth=".7" fill="none" />
      <path d="M1 7.500l6.500 3 7.500-3.700" stroke="#e59a8d" strokeWidth=".7" fill="none" />
      <path d="M5 4.300l.3-1.800 3.700-1 2 .8v1.500" stroke="#292929" strokeWidth="1.300" fill="none" />
      <path d="M3 7.500v2.500M5.500 9v2.300" stroke="#f1d7cf" />
    </svg>
  );
}
function ScriptIcon() {
  return (
    <svg viewBox="0 0 16 16" className="h-4 w-4 shrink-0">
      <path d="M4 1.500h9c2 0 2 3 0 3h-1.500c-1 2-.5 4 .5 6.500.5 2-.5 4-2.500 4h-7c-2 0-2-3 0-3h2.500c.5-3-1-5-1.500-7.500-.3-1.500-.5-3 .5-3z" fill="#cbe5fa" stroke="#3d8ecd" />
      <path d="M6 5.500h4M6 7.500h4M6.500 9.500h4" stroke="#2c6eae" />
      <path d="M12 3h2.500M2 13.500h7" stroke="#287ac4" strokeWidth="1.500" />
    </svg>
  );
}
function HDots({ w }: { w: "s" | "l" }) {
  return <div className={`mt-[2px] h-0 shrink-0 border-t border-dotted border-[#858585] ${w === "s" ? "w-[5px]" : "w-[12px]"}`} />;
}
function VLine() {
  return <div className="-mr-px h-[18px] w-px shrink-0 border-l border-dotted border-[#858585]" />;
}
function ExpCell({ open }: { open?: boolean }) {
  return (
    <div className="flex h-[18px] w-[9px] shrink-0 flex-col items-center">
      <div className="h-[6px] border-l border-dotted border-[#858585]" />
      <Expander open={open} />
      <div className="h-[3px] border-l border-dotted border-[#858585]" />
    </div>
  );
}
function BoxRow({ name, open }: { name: string; open?: boolean }) {
  return (
    <div className="flex h-[18px] items-center pl-[8px] whitespace-nowrap">
      <ExpCell open={open} /><HDots w="s" />
      <div className="mb-[1px] ml-[1px]"><ToolboxIcon /></div>
      <span className="ml-[5px] text-[12px]">{name}</span>
    </div>
  );
}

function Toolbox() {
  return (
    <div className="ml-[5px] flex w-[291px] shrink-0 flex-col">
      <PanelHeader title="ArcToolbox" />
      <div className="flex h-[562px] flex-col border-t border-b border-l border-[#7d8591] bg-white">
        <div className="flex h-[543px]">
          <div className="w-[272px] shrink-0 pt-[1px] tracking-[-0.22px]">
            {toolsets.map((t) => (
              <div key={t} className="flex h-[18px] items-center pl-[12px] whitespace-nowrap">
                <VLine /><div className="w-[15px] shrink-0" />
                <ExpCell /><HDots w="s" />
                <div className="mb-[1px]"><ToolsetIcon /></div>
                <span className={`ml-[5px] text-[12px] ${t.length > 16 ? "tracking-[-0.36px]" : ""}`}>{t}</span>
              </div>
            ))}
            {boxes.map((t) => <BoxRow key={t} name={t} open={t === "Toolbox"} />)}
            <div className="flex h-[18px] items-center pl-[12px] whitespace-nowrap">
              <VLine /><div className="w-[19px] shrink-0" />
              <div className="mb-[7px] h-[11px] w-0 border-l border-dotted border-[#858585]" /><HDots w="l" />
              <div className="mr-[4px] -ml-[1px]"><ScriptIcon /></div>
              <span className="text-[12px] tracking-[-0.47px]">Coincident Geometry Between Feature L</span>
            </div>
            <BoxRow name="Tracking Analyst Tools" />
          </div>
          <div className="ml-[1px] flex w-[15px] flex-col bg-[#efefef] pt-[2px]">
            <Arrow d={UP} />
            <div className="h-[324px]" />
            <div className="flex h-[184px]"><ThumbV /></div>
            <div className="flex-1" />
            <Arrow d={DOWN} />
          </div>
        </div>
        <div className="flex h-[16px] w-[272px] items-center bg-[#efefef]">
          <div className="mr-[3px] ml-[1px]"><Arrow d={LEFT} /></div>
          <div className="flex h-[15px] w-[210px]"><ThumbH /></div>
          <div className="flex-1" />
          <Arrow d={RIGHT} />
        </div>
      </div>
    </div>
  );
}

/* ---------- notes drawn over the map ---------- */

function Notes() {
  return (
    <div className="pointer-events-none absolute inset-0 font-['Liberation_Sans',sans-serif] text-[#000080]">
      <div className="absolute top-[200px] left-[652px] h-[35px] w-[357px] border border-[#aaa9b0] bg-[#ffff33] pt-[1px] pl-[7px] text-[16px] leading-[22px] tracking-[0.11px] whitespace-nowrap mix-blend-multiply">
        New Cow Coincident Features in New Routes
      </div>
      <div className="absolute top-[534px] left-[925px] h-[35px] w-[110px] border border-[#aaa9b0] bg-[#ffff33] pt-[1px] pl-[2px] text-[16px] leading-[22px] tracking-[0.03px] whitespace-nowrap mix-blend-multiply">
        Raw Features
      </div>
      <div className="absolute top-[604px] left-[687px] h-[58px] w-[285px] border border-[#aaa9b0] bg-[#ffff33] pl-[5px] text-[35px] leading-[48px] tracking-[-0.38px] whitespace-nowrap mix-blend-multiply">
        Add New Toolbox
      </div>
      <svg viewBox="0 0 1364 708" className="absolute inset-0 h-[708px] w-[1364px]" fill="#f52d33" stroke="#000" strokeWidth="1.500">
        <path d="M824 249l71 172M909 543l-42-31M980 630.500l74 5" strokeWidth="1.800" />
        <path d="M886 424l17.500-8-1.500 22zM852.500 500.500l21 4.500-12 14zM1053 626.500v18l19.500-8z" />
      </svg>
    </div>
  );
}

export default function App() {
  return (
    <div className="relative flex h-[708px] w-[1364px] flex-col overflow-hidden bg-gradient-to-r from-[#efefef] via-[#f4f4f4] to-[#fbfbfb] font-['Open_Sans','Noto_Sans',sans-serif] leading-[16px] tracking-[-0.2px] text-black">
      <TitleBar />
      <MenuBar />
      <Toolbars />
      <div className="flex h-[584px] shrink-0">
        <Contents />
        <div className="w-[4px] shrink-0" />
        <MapView />
        <Toolbox />
      </div>
      <Notes />
    </div>
  );
}
